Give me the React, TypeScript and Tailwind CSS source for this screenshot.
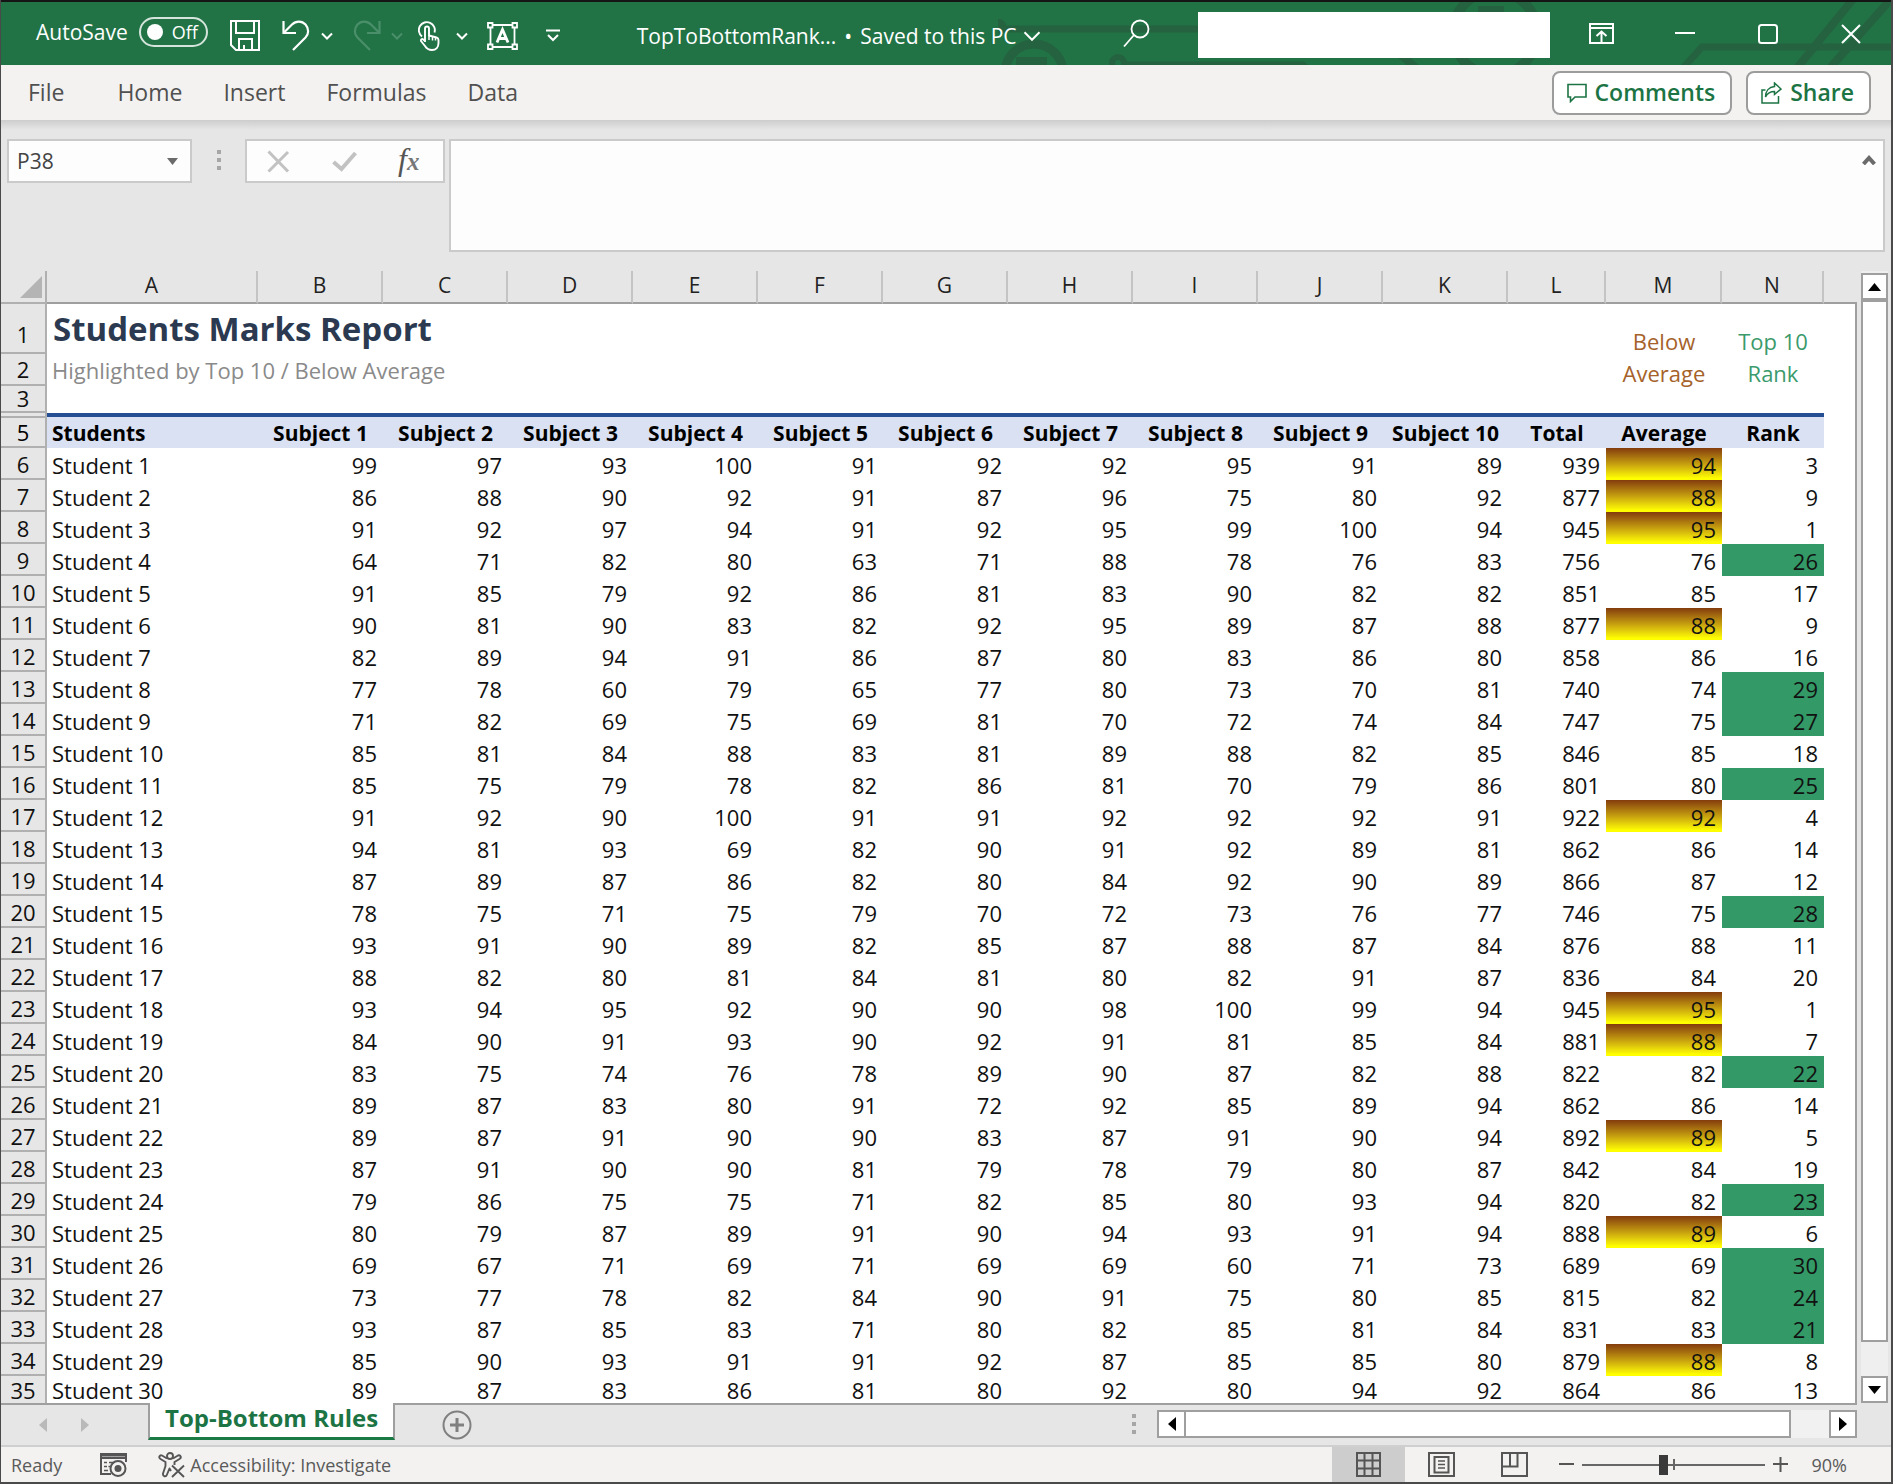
import React from "react";

const COLUMNS = ["A", "B", "C", "D", "E", "F", "G", "H", "I", "J", "K", "L", "M", "N"];

const HEADINGS = [
  "Students", "Subject 1", "Subject 2", "Subject 3", "Subject 4", "Subject 5", "Subject 6",
  "Subject 7", "Subject 8", "Subject 9", "Subject 10", "Total", "Average", "Rank",
];

// Ten subject marks, then total, average and rank for each student.
const MARKS: number[][] = [
  [99, 97, 93, 100, 91, 92, 92, 95, 91, 89, 939, 94, 3],
  [86, 88, 90, 92, 91, 87, 96, 75, 80, 92, 877, 88, 9],
  [91, 92, 97, 94, 91, 92, 95, 99, 100, 94, 945, 95, 1],
  [64, 71, 82, 80, 63, 71, 88, 78, 76, 83, 756, 76, 26],
  [91, 85, 79, 92, 86, 81, 83, 90, 82, 82, 851, 85, 17],
  [90, 81, 90, 83, 82, 92, 95, 89, 87, 88, 877, 88, 9],
  [82, 89, 94, 91, 86, 87, 80, 83, 86, 80, 858, 86, 16],
  [77, 78, 60, 79, 65, 77, 80, 73, 70, 81, 740, 74, 29],
  [71, 82, 69, 75, 69, 81, 70, 72, 74, 84, 747, 75, 27],
  [85, 81, 84, 88, 83, 81, 89, 88, 82, 85, 846, 85, 18],
  [85, 75, 79, 78, 82, 86, 81, 70, 79, 86, 801, 80, 25],
  [91, 92, 90, 100, 91, 91, 92, 92, 92, 91, 922, 92, 4],
  [94, 81, 93, 69, 82, 90, 91, 92, 89, 81, 862, 86, 14],
  [87, 89, 87, 86, 82, 80, 84, 92, 90, 89, 866, 87, 12],
  [78, 75, 71, 75, 79, 70, 72, 73, 76, 77, 746, 75, 28],
  [93, 91, 90, 89, 82, 85, 87, 88, 87, 84, 876, 88, 11],
  [88, 82, 80, 81, 84, 81, 80, 82, 91, 87, 836, 84, 20],
  [93, 94, 95, 92, 90, 90, 98, 100, 99, 94, 945, 95, 1],
  [84, 90, 91, 93, 90, 92, 91, 81, 85, 84, 881, 88, 7],
  [83, 75, 74, 76, 78, 89, 90, 87, 82, 88, 822, 82, 22],
  [89, 87, 83, 80, 91, 72, 92, 85, 89, 94, 862, 86, 14],
  [89, 87, 91, 90, 90, 83, 87, 91, 90, 94, 892, 89, 5],
  [87, 91, 90, 90, 81, 79, 78, 79, 80, 87, 842, 84, 19],
  [79, 86, 75, 75, 71, 82, 85, 80, 93, 94, 820, 82, 23],
  [80, 79, 87, 89, 91, 90, 94, 93, 91, 94, 888, 89, 6],
  [69, 67, 71, 69, 71, 69, 69, 60, 71, 73, 689, 69, 30],
  [73, 77, 78, 82, 84, 90, 91, 75, 80, 85, 815, 82, 24],
  [93, 87, 85, 83, 71, 80, 82, 85, 81, 84, 831, 83, 21],
  [85, 90, 93, 91, 91, 92, 87, 85, 85, 80, 879, 88, 8],
  [89, 87, 83, 86, 81, 80, 92, 80, 94, 92, 864, 86, 13],
];

// Ranks 1-10 get the gradient on Average; the ten lowest places get a green Rank cell.
const isTopTen = (rank: number) => rank <= 10;
const isBottomTen = (rank: number) => rank > 20;

function Chevron({ w = 12 }: { w?: number }) {
  return (
    <svg width={w} height={w > 14 ? 12 : 8} viewBox="0 0 12 8" fill="none" stroke="currentColor" strokeWidth={w > 14 ? 1.3 : 2}>
      <path d="M1 1.5 6 6.5 11 1.5" />
    </svg>
  );
}

function Circuit() {
  return (
    <svg className="pointer-events-none absolute inset-y-0 right-0 h-full w-[893px] text-[#25623f]" viewBox="0 0 893 63" preserveAspectRatio="xMaxYMin slice" fill="none" stroke="currentColor">
      <circle cx="1" cy="24" r="7" fill="currentColor" stroke="none" />
      <path d="M2 27H400" strokeWidth="7" />
      <circle cx="36" cy="71" r="29" strokeWidth="9" />
      <path d="M18 59H49" strokeWidth="8" />
      <circle cx="120" cy="61" r="6" strokeWidth="6" />
      <path d="M128 62H305l10 8" strokeWidth="5" />
      <path d="M395 46l30 26" strokeWidth="8" />
      <circle cx="497" cy="31" r="42" strokeWidth="10" />
      <path d="M480 7h26" strokeWidth="6" />
      <path d="M685 66 704 45H893" strokeWidth="7" />
      <path d="M799 66 856 -4M832 66 892 -2" strokeWidth="8" />
    </svg>
  );
}

function SaveIcon() {
  return (
    <svg width="30" height="31" viewBox="0 0 30 31" fill="none" stroke="currentColor" strokeWidth="2">
      <path d="M1 1H29V30H6L1 25Z" />
      <path d="M6 1V13H24V1M9 30V19H22V30M14 30V25" />
    </svg>
  );
}

function UndoIcon() {
  return (
    <svg width="28" height="31" viewBox="0 0 28 31" fill="none" stroke="currentColor" strokeWidth="2.2">
      <path d="M1.5 1V13H14" />
      <path d="M2 12.5 10 4.500C14 .5 20 .6 23.500 4.500C27 8.500 27 14 23.500 17.500L11 30" />
    </svg>
  );
}

function TouchIcon() {
  return (
    <svg width="22" height="31" viewBox="0 0 22 31" fill="none" stroke="currentColor" strokeWidth="1.900" strokeLinejoin="round">
      <path d="M4 16.500A8 8 0 1 1 16.500 12.500" />
      <path d="M7 22V8.500A2 2 0 0 1 11 8.500V15.500L18.500 17.500Q20.500 18 20.500 20V23C20.500 27 18 30 14 30C10 30 8.500 28.500 7 26L3 21C2.500 19.500 4 18.500 5.200 19.500L7 21" />
      <path d="M11 15V20M14.500 16.500V20.500M17.500 17.500V20.500" strokeWidth="1.500" />
    </svg>
  );
}

function TextBoxIcon() {
  return (
    <svg width="31" height="28" viewBox="0 0 31 28" fill="none" stroke="currentColor" strokeWidth="1.800">
      <path d="M5 3H26M5 25H26M3.500 5V23M27.500 5V23" />
      <path d="M1 1H5.500V5.500H1ZM25.500 1H30V5.500H25.500ZM1 22.500H5.500V27H1ZM25.500 22.500H30V27H25.500Z" />
      <path d="M10 20.500 15.500 7.500 21 20.500M11.800 16.500H19.200" strokeWidth="2.800" />
    </svg>
  );
}

function TitleBar() {
  return (
    <header className="relative flex h-[65px] shrink-0 items-center justify-between overflow-hidden border-t-2 border-[#151515] bg-[#217346] text-white">
      <Circuit />
      <div className="relative flex items-center pb-1 pl-[35px]">
        <label htmlFor="autosave" className="text-[21px] leading-[30px]">AutoSave</label>
        <div className="relative ml-[11px] flex items-center text-[18px]">
          <input id="autosave" type="checkbox" role="switch" className="h-[30px] w-[69px] appearance-none rounded-full border-2 border-[#d5e5db] bg-transparent before:mt-[5px] before:ml-[6px] before:block before:size-4 before:rounded-full before:bg-white" />
          <span className="pointer-events-none absolute right-[10px] leading-none">Off</span>
        </div>
        <div className="mt-2 flex items-center">
          <button aria-label="Save" className="ml-[22px]"><SaveIcon /></button>
          <button aria-label="Undo" className="ml-[22px]"><UndoIcon /></button>
          <button aria-label="Undo options" className="ml-[11px]"><Chevron /></button>
          <button aria-label="Redo" disabled className="ml-5 -scale-x-100 text-[#4a8f69]"><UndoIcon /></button>
          <button aria-label="Redo options" disabled className="ml-[10px] text-[#4a8f69]"><Chevron /></button>
          <button aria-label="Touch mode" className="ml-[15px]"><TouchIcon /></button>
          <button aria-label="Touch mode options" className="ml-4"><Chevron /></button>
          <button aria-label="Text box" className="ml-[19px]"><TextBoxIcon /></button>
          <button aria-label="Customize toolbar" className="ml-7">
            <svg width="14" height="13" viewBox="0 0 14 13" fill="none" stroke="currentColor" strokeWidth="2"><path d="M0 1.500H14M2 6 7 11 12 6" /></svg>
          </button>
        </div>
        <button className="ml-[77px] mt-2 flex items-center gap-1.5 text-[21px] leading-[30px]">
          <span className="flex gap-2"><span>TopToBottomRank...</span><span>•</span><span>Saved to this PC</span></span>
          <Chevron w={18} />
        </button>
      </div>
      <div className="relative flex items-center pr-[30px]">
        <button aria-label="Search" className="mr-12">
          <svg width="27" height="29" viewBox="0 0 27 29" fill="none" stroke="currentColor" strokeWidth="1.800"><circle cx="17" cy="10" r="8.500" /><path d="M11 16 1 27.500" /></svg>
        </button>
        <input aria-label="Account" className="mt-0.5 h-[46px] w-[352px] bg-white px-2 text-black" />
        <button aria-label="Ribbon display options" className="ml-[39px]">
          <svg width="25" height="21" viewBox="0 0 25 21" fill="none" stroke="currentColor" strokeWidth="2"><path d="M1 1H24V20H1ZM1 5H24M12.500 20V9M7.500 13 12.500 8.500 17.500 13" /></svg>
        </button>
        <button aria-label="Minimize" className="ml-[61px]">
          <svg width="20" height="20" viewBox="0 0 20 20" stroke="currentColor" strokeWidth="2"><path d="M0 9H20" /></svg>
        </button>
        <button aria-label="Maximize" className="ml-[63px]">
          <svg width="20" height="20" viewBox="0 0 20 20" fill="none" stroke="currentColor" strokeWidth="2"><rect x="1" y="1" width="18" height="18" rx="2.500" /></svg>
        </button>
        <button aria-label="Close" className="ml-[63px]">
          <svg width="20" height="20" viewBox="0 0 20 20" stroke="currentColor" strokeWidth="2"><path d="M1 1 19 19M19 1 1 19" /></svg>
        </button>
      </div>
    </header>
  );
}

function Ribbon() {
  const action = "flex h-11 items-center rounded-[8px] border-2 border-[#9c9c9c] bg-white text-[23px] font-semibold leading-none text-[#1c7444]";
  return (
    <nav className="flex h-[55px] shrink-0 items-center justify-between bg-[#f3f2f1] pr-5 pl-[27px] text-[23px] leading-none text-[#505050]">
      <div className="flex items-center gap-[41px]">
        <button className="mr-3">File</button>
        <button>Home</button>
        <button>Insert</button>
        <button>Formulas</button>
        <button>Data</button>
      </div>
      <div className="flex items-center gap-[14px]">
        <button className={action + " gap-2 pr-[15px] pl-[13px]"}>
          <svg width="20" height="20" viewBox="0 0 20 20" fill="none" stroke="currentColor" strokeWidth="1.600"><path d="M1 1.500H19V14H8L3.500 18.500V14H1Z" /></svg>
          Comments
        </button>
        <button className={action + " gap-2 pr-[15px] pl-[13px]"}>
          <svg width="21" height="22" viewBox="0 0 21 22" fill="none" stroke="currentColor" strokeWidth="1.500"><path d="M4.500 8H1V21H17.500V14M13.500 1 20 7 13.500 12.500V9.500C9 9.500 6.500 11 4.500 15C4.500 9 8 5 13.500 4.500Z" /></svg>
          Share
        </button>
      </div>
    </nav>
  );
}

function Dots() {
  return (
    <div className="flex flex-col gap-1" aria-hidden="true">
      <span className="size-1 bg-[#a6a6a6]" />
      <span className="size-1 bg-[#a6a6a6]" />
      <span className="size-1 bg-[#a6a6a6]" />
    </div>
  );
}

function FormulaBar() {
  return (
    <section className="flex shrink-0 items-start bg-gradient-to-b from-[#cdcdcd] to-[#e6e6e6] to-[10px] pt-[19px] pr-[6px] pb-[19px] pl-[6px]">
      <div className="flex h-11 w-[185px] items-center border-2 border-[#cacaca] bg-[#fdfdfd] pr-3">
        <input aria-label="Name box" defaultValue="P38" className="w-full min-w-0 bg-transparent pt-0.5 pl-2 text-[21px] text-[#444]" />
        <button aria-label="Name list">
          <svg width="11" height="7" viewBox="0 0 11 7" fill="#6b6b6b"><path d="M0 0H11L5.500 7Z" /></svg>
        </button>
      </div>
      <div className="flex h-[42px] w-[53px] items-center justify-center"><Dots /></div>
      <div className="flex h-11 w-[200px] items-center border-2 border-[#cacaca] bg-[#fdfdfd] pl-5 text-[#c2c2c2]">
        <button aria-label="Cancel">
          <svg width="23" height="23" viewBox="0 0 23 23" stroke="currentColor" strokeWidth="3"><path d="M1.500 1.500 21 21.500M21 2 1.500 21.500" /></svg>
        </button>
        <button aria-label="Enter" className="ml-[42px]">
          <svg width="25" height="21" viewBox="0 0 25 21" fill="none" stroke="currentColor" strokeWidth="4"><path d="M1.500 11 9.500 18 23.500 2" /></svg>
        </button>
        <button aria-label="Insert function" className="ml-[41px] pb-1 font-[Liberation_Serif] text-[32px] leading-none text-[#555] italic">
          f<span className="text-[25px] font-bold text-[#777]">x</span>
        </button>
      </div>
      <div className="ml-1 flex h-[113px] flex-1 items-start border-2 border-[#cacaca] bg-[#fdfdfd]">
        <textarea aria-label="Formula" className="h-full flex-1 resize-none bg-transparent p-2 text-[21px]" />
        <button aria-label="Collapse formula bar" className="mt-[14px] mr-[7px]">
          <svg width="14" height="10" viewBox="0 0 14 10" fill="none" stroke="#6b6b6b" strokeWidth="4"><path d="M1.500 9 7 3 12.500 9" /></svg>
        </button>
      </div>
    </section>
  );
}

const ROW_HEAD = "border-r-2 border-b-2 border-[#b0b0b0] bg-[#e6e6e6] p-0 text-center font-normal";
const LAST_ROW_HEAD = "border-r-2 border-[#b0b0b0] bg-[#e6e6e6] p-0 text-center font-normal";
const EDGE = "border-r-2 border-[#9f9f9f] p-0";

function Sheet() {
  return (
    <table className="w-full table-fixed border-separate border-spacing-0 text-[22px] leading-[28px] text-[#111]">
      <colgroup>
        <col className="w-[46px]" />
        <col className="w-[211px]" />
        {COLUMNS.slice(1, 11).map((c) => <col key={c} className="w-[125px]" />)}
        <col className="w-[98px]" />
        <col className="w-[116px]" />
        <col className="w-[102px]" />
        <col />
      </colgroup>
      <thead>
        <tr className="h-[33px] bg-[#e6e6e6] text-[21px] text-[#222]">
          <th aria-label="Select all" className="border-r-2 border-b-2 border-[#b0b0b0] p-0">
            <svg width="22" height="22" viewBox="0 0 22 22" fill="#b4b4b4" className="ml-[19px]"><path d="M22 0V22H0Z" /></svg>
          </th>
          {COLUMNS.map((c) => (
            <th key={c} className="border-r-2 border-b-2 border-r-[#c4c4c4] border-b-[#9f9f9f] p-0 pb-1 leading-6 font-normal">{c}</th>
          ))}
          <th className="border-b-2 border-[#9f9f9f]" />
        </tr>
      </thead>
      <tbody>
        <tr className="h-[50px]">
          <th className={ROW_HEAD + " pt-3"}>1</th>
          <td colSpan={12} className="p-0 pl-[6px] text-[33px] leading-[46px] font-bold text-[#2b3a50]">Students Marks Report</td>
          <td rowSpan={3} className="p-0 pb-1 text-center leading-8 text-[#a5622a]">Below<br />Average</td>
          <td rowSpan={3} className="p-0 pb-1 text-center leading-8 text-[#3b9a6c]">Top 10<br />Rank</td>
          <td className={EDGE} />
        </tr>
        <tr className="h-8">
          <th className={ROW_HEAD}>2</th>
          <td colSpan={12} className="p-0 pl-[5px] text-[#8a8a8a]">Highlighted by Top 10 / Below Average</td>
          <td className={EDGE} />
        </tr>
        <tr className="h-[27px]">
          <th className={ROW_HEAD + " leading-[25px]"}>3</th>
          <td colSpan={12} className="p-0" />
          <td className={EDGE} />
        </tr>
        <tr className="h-[5px]">
          <th className={ROW_HEAD} />
          <td colSpan={14} className="border-t-4 border-[#264e92] bg-[#d9e1f2] p-0" />
          <td className={EDGE} />
        </tr>
        <tr className="h-[30px] font-bold text-black">
          <th className={ROW_HEAD}>5</th>
          {HEADINGS.map((h, i) => (
            <th key={h} scope="col" className={i === 0 ? "bg-[#d9e1f2] p-0 pl-[5px] text-left text-[21px]" : "bg-[#d9e1f2] p-0 text-center text-[21px] whitespace-nowrap"}>{h}</th>
          ))}
          <td className={EDGE} />
        </tr>
        {MARKS.map((row, r) => {
          const rank = row[12];
          const isLast = r === MARKS.length - 1;
          const number = isLast ? "p-0 pr-[6px] text-right" : "p-0 pt-0.5 pr-[6px] text-right";
          return (
            <tr key={r} className={isLast ? "h-[27px] leading-6" : "h-8"}>
              <th scope="row" className={isLast ? LAST_ROW_HEAD : ROW_HEAD + " pt-0.5"}>{r + 6}</th>
              <td className={isLast ? "p-0 pl-[5px]" : "p-0 pt-0.5 pl-[5px]"}>Student {r + 1}</td>
              {row.map((v, i) => {
                let fill = number;
                if (i === 11 && isTopTen(rank)) fill = "bg-gradient-to-b from-[#833c0c] to-[#ffff00] to-95% " + number;
                if (i === 12 && isBottomTen(rank)) fill = "bg-[#339966] " + number;
                return <td key={i} className={fill}>{v}</td>;
              })}
              <td className={EDGE} />
            </tr>
          );
        })}
      </tbody>
    </table>
  );
}

const ARROW_BOX = "flex items-center justify-center border-2 border-[#9f9f9f] bg-white";

function VerticalScroll() {
  return (
    <div className="flex w-[27px] shrink-0 flex-col bg-[#efefef] pt-0.5">
      <button aria-label="Scroll up" className={ARROW_BOX + " h-[27px]"}>
        <svg width="13" height="8" viewBox="0 0 13 8"><path d="M0 8 6.500 0 13 8Z" /></svg>
      </button>
      <div className="mb-[34px] flex-1 border-2 border-[#9f9f9f] bg-white" />
      <button aria-label="Scroll down" className={ARROW_BOX + " h-[27px]"}>
        <svg width="13" height="8" viewBox="0 0 13 8"><path d="M0 0H13L6.500 8Z" /></svg>
      </button>
    </div>
  );
}

function TabBar() {
  return (
    <footer className="flex h-[42px] shrink-0 items-start justify-between bg-[#e6e6e6]">
      <div className="flex flex-1 items-start border-t-2 border-[#9f9f9f] pl-[38px]">
        <div className="flex h-10 w-[109px] items-center gap-[34px]">
          <button aria-label="Previous sheet"><svg width="8" height="14" viewBox="0 0 8 14" fill="#b9b9b9"><path d="M8 0V14L0 7Z" /></svg></button>
          <button aria-label="Next sheet"><svg width="8" height="14" viewBox="0 0 8 14" fill="#b9b9b9"><path d="M0 0V14L8 7Z" /></svg></button>
        </div>
        <button className="-mt-0.5 flex h-[37px] items-center border-r-2 border-b-[3px] border-l-2 border-r-[#9f9f9f] border-b-[#1a7a43] border-l-[#9f9f9f] bg-white px-[15px] pb-1 text-[24px] leading-none font-bold text-[#1c7444]">Top-Bottom Rules</button>
        <button aria-label="New sheet" className="mt-1 ml-[47px]">
          <svg width="30" height="32" viewBox="0 0 30 32" fill="none" stroke="#808080" strokeWidth="2"><circle cx="15" cy="16" r="13.500" /><path d="M15 9V23M8 16H22" strokeWidth="3" /></svg>
        </button>
      </div>
      <div className="flex h-full w-[725px] items-start border-t-2 border-[#9f9f9f] pt-[5px]">
        <div className="flex h-[27px] w-[25px] items-center"><Dots /></div>
        <div className="flex h-[28px] flex-1 bg-[#f1f1f1]">
          <button aria-label="Scroll left" className={ARROW_BOX + " w-[29px]"}>
            <svg width="8" height="14" viewBox="0 0 8 14"><path d="M8 0V14L0 7Z" /></svg>
          </button>
          <div className="mr-[38px] -ml-0.5 flex-1 border-2 border-[#9f9f9f] bg-white" />
          <button aria-label="Scroll right" className={ARROW_BOX + " w-[28px]"}>
            <svg width="8" height="14" viewBox="0 0 8 14"><path d="M0 0V14L8 7Z" /></svg>
          </button>
        </div>
      </div>
      <div className="w-[34px]" />
    </footer>
  );
}

function StatusBar() {
  return (
    <div className="flex h-[37px] shrink-0 items-center justify-between border-t-2 border-[#cfcfcf] bg-[#f3f2f1] pl-[10px] text-[18px] leading-none text-[#5a5a5a]">
      <div className="flex items-center">
        <span>Ready</span>
        <button aria-label="Record macro" className="ml-[38px]">
          <svg width="27" height="25" viewBox="0 0 27 25" fill="none" stroke="#555" strokeWidth="2">
            <path d="M11 22H1V2H26V10M1 6H26" /><path d="M1 3H26" strokeWidth="3" />
            <path d="M4 10.500H7M9 10.500H14M4 14.500H7M8.500 14.500H10M4 18.500H8" strokeWidth="1.700" />
            <circle cx="18" cy="16.500" r="7.500" /><circle cx="18" cy="16.500" r="3.500" fill="#555" stroke="none" />
          </svg>
        </button>
        <button className="ml-[31px] flex items-center gap-[5px]">
          <svg width="27" height="26" viewBox="0 0 27 26" fill="none" stroke="#555" strokeWidth="1.900" strokeLinejoin="round">
            <circle cx="12" cy="4" r="3" />
            <path d="M9 6.500 4 3.500C2 2.500 0 5.500 2.500 7L7.500 10V14L5 21.500C4.500 24.500 8 25.500 9 22.500L11.500 16.500L13 19M15 6.500 20 3.500C22.500 2.500 24 5.500 21.500 7L16.500 10V13" />
            <path d="M14 13.500 26 25M26 13.500 14 25" />
          </svg>
          Accessibility: Investigate
        </button>
      </div>
      <div className="flex h-full items-center pr-11">
        <button aria-label="Normal view" className="flex h-full w-[73px] items-center justify-center bg-[#cdcdcd]">
          <svg width="25" height="25" viewBox="0 0 25 25" fill="none" stroke="#555" strokeWidth="2"><path d="M1 1H24V24H1ZM8.500 1V24M16.500 1V24M1 8.500H24M1 16.500H24" /></svg>
        </button>
        <button aria-label="Page layout" className="flex w-[73px] justify-center">
          <svg width="27" height="25" viewBox="0 0 27 25" fill="none" stroke="#555" strokeWidth="2"><path d="M1 1H26V24H1ZM6.500 5H20.500V20.500H6.500Z" /><path d="M10 9H17M10 12.500H17M10 16H17" strokeWidth="1.600" /></svg>
        </button>
        <button aria-label="Page break preview" className="flex w-[73px] justify-center">
          <svg width="27" height="25" viewBox="0 0 27 25" fill="none" stroke="#555" strokeWidth="2"><path d="M1 1H26V24H1ZM1 14.500H16.500V1M9 1V14.500" /></svg>
        </button>
        <button aria-label="Zoom out" className="ml-2">
          <svg width="15" height="16" viewBox="0 0 15 16" stroke="#555" strokeWidth="2"><path d="M0 7H15" /></svg>
        </button>
        <div className="relative ml-2 flex h-6 w-[183px] items-center">
          <input
            type="range" aria-label="Zoom" min={10} max={190} defaultValue={90}
            className="h-5 w-full appearance-none bg-transparent [&::-webkit-slider-runnable-track]:h-0.5 [&::-webkit-slider-runnable-track]:bg-[#666] [&::-webkit-slider-thumb]:-mt-[9px] [&::-webkit-slider-thumb]:h-5 [&::-webkit-slider-thumb]:w-[9px] [&::-webkit-slider-thumb]:appearance-none [&::-webkit-slider-thumb]:bg-[#3a3a3a]"
          />
          <span className="pointer-events-none absolute left-1/2 h-[11px] w-0.5 bg-[#666]" />
        </div>
        <button aria-label="Zoom in" className="ml-2">
          <svg width="15" height="16" viewBox="0 0 15 16" stroke="#555" strokeWidth="2"><path d="M0 7H15M7.500 0V15" /></svg>
        </button>
        <span className="ml-6">90%</span>
      </div>
    </div>
  );
}

export default function App() {
  return (
    <div className="flex h-screen min-w-[1200px] flex-col overflow-hidden border-r-2 border-b-2 border-l border-[#4a4a4a] bg-[#e6e6e6] font-['Open_Sans','Noto_Sans',sans-serif]">
      <TitleBar />
      <Ribbon />
      <FormulaBar />
      <main className="flex min-h-0 flex-1">
        <div className="mr-1 min-w-0 flex-1 overflow-hidden bg-white">
          <Sheet />
        </div>
        <VerticalScroll />
        <div className="w-[3px]" />
      </main>
      <TabBar />
      <StatusBar />
    </div>
  );
}
